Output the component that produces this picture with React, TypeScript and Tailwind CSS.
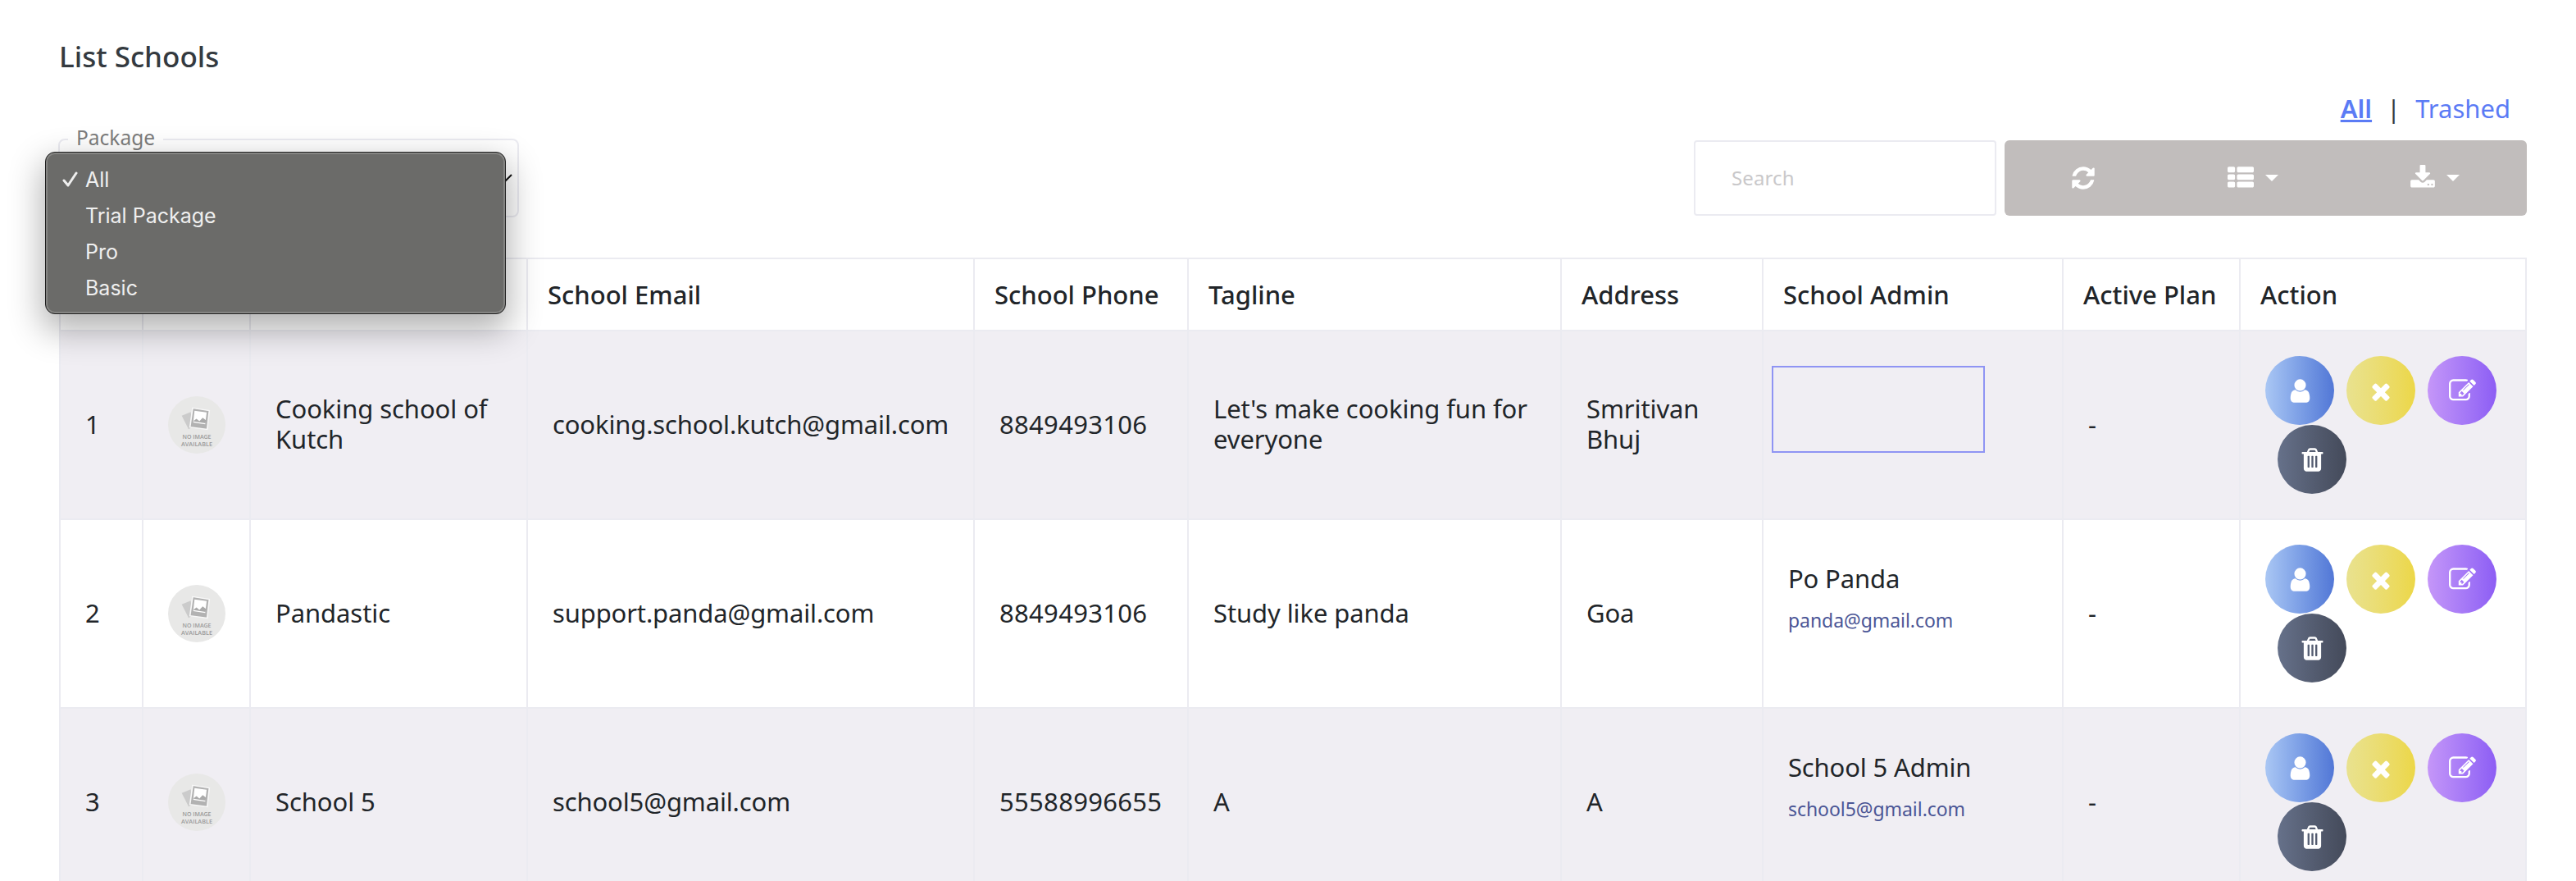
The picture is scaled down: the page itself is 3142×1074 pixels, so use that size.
const ICONS = {
  user: "M1536 1399q0 109-62.5 187t-150.5 78h-854q-88 0-150.5-78t-62.5-187q0-85 8.5-160.5t31.5-152 58.5-131 94-89 134.5-34.5q131 128 313 128t313-128q76 0 134.5 34.5t94 89 58.5 131 31.5 152 8.5 160.5zm-256-887q0 159-112.5 271.5t-271.5 112.5-271.5-112.5-112.5-271.5 112.5-271.5 271.5-112.5 271.5 112.5 112.5 271.5z",
  times: "M1490 1322q0 40-28 68l-136 136q-28 28-68 28t-68-28l-294-294-294 294q-28 28-68 28t-68-28l-136-136q-28-28-28-68t28-68l294-294-294-294q-28-28-28-68t28-68l136-136q28-28 68-28t68 28l294 294 294-294q28-28 68-28t68 28l136 136q28 28 28 68t-28 68l-294 294 294 294q28 28 28 68z",
  edit: "M888 1184l116-116-152-152-116 116v56h96v96h56zm440-720q-16-16-33 1l-350 350q-17 17-1 33t33-1l350-350q17-17 1-33zm80 594v190q0 119-84.5 203.5t-203.5 84.5h-832q-119 0-203.5-84.5t-84.5-203.5v-832q0-119 84.5-203.5t203.5-84.5h832q63 0 117 25 15 7 18 23 3 17-9 29l-49 49q-14 14-32 8-23-6-45-6h-832q-66 0-113 47t-47 113v832q0 66 47 113t113 47h832q66 0 113-47t47-113v-126q0-13 9-22l64-64q15-15 35-7t20 29zm-96-738l288 288-672 672h-288v-288zm444 132l-92 92-288-288 92-92q28-28 68-28t68 28l152 152q28 28 28 68t-28 68z",
  trash:
    "M704 1376v-704q0-14-9-23t-23-9h-64q-14 0-23 9t-9 23v704q0 14 9 23t23 9h64q14 0 23-9t9-23zm256 0v-704q0-14-9-23t-23-9h-64q-14 0-23 9t-9 23v704q0 14 9 23t23 9h64q14 0 23-9t9-23zm256 0v-704q0-14-9-23t-23-9h-64q-14 0-23 9t-9 23v704q0 14 9 23t23 9h64q14 0 23-9t9-23zm-544-992h448l-48-117q-7-9-17-11h-317q-10 2-17 11zm928 32v64q0 14-9 23t-23 9h-96v948q0 83-47 143.5t-113 60.5h-832q-66 0-113-58.5t-47-141.5v-952h-96q-14 0-23-9t-9-23v-64q0-14 9-23t23-9h309l70-167q15-37 54-63t79-26h320q40 0 79 26t54 63l70 167h309q14 0 23 9t9 23z",
  refresh:
    "M1639 1056q0 5-1 7-64 268-268 434.5t-478 166.5q-146 0-282.5-55t-243.5-157l-129 129q-19 19-45 19t-45-19-19-45v-448q0-26 19-45t45-19h448q26 0 45 19t19 45-19 45l-137 137q71 66 161 102t187 36q134 0 250-65t186-179q11-17 53-117 8-23 30-23h192q13 0 22.5 9.5t9.5 22.5zm25-800v448q0 26-19 45t-45 19h-448q-26 0-45-19t-19-45 19-45l138-138q-148-137-349-137-134 0-250 65t-186 179q-11 17-53 117-8 23-30 23h-199q-13 0-22.5-9.5t-9.5-22.5v-7q65-268 270-434.5t480-166.5q146 0 284 55.5t245 156.5l130-129q19-19 45-19t45 19 19 45z",
  list: "M512 1248v192q0 40-28 68t-68 28h-320q-40 0-68-28t-28-68v-192q0-40 28-68t68-28h320q40 0 68 28t28 68zm0-512v192q0 40-28 68t-68 28h-320q-40 0-68-28t-28-68v-192q0-40 28-68t68-28h320q40 0 68 28t28 68zm1280 512v192q0 40-28 68t-68 28h-960q-40 0-68-28t-28-68v-192q0-40 28-68t68-28h960q40 0 68 28t28 68zm-1280-1024v192q0 40-28 68t-68 28h-320q-40 0-68-28t-28-68v-192q0-40 28-68t68-28h320q40 0 68 28t28 68zm1280 512v192q0 40-28 68t-68 28h-960q-40 0-68-28t-28-68v-192q0-40 28-68t68-28h960q40 0 68 28t28 68zm0-512v192q0 40-28 68t-68 28h-960q-40 0-68-28t-28-68v-192q0-40 28-68t68-28h960q40 0 68 28t28 68z",
  download:
    "M1344 1344q0-26-19-45t-45-19-45 19-19 45 19 45 45 19 45-19 19-45zm256 0q0-26-19-45t-45-19-45 19-19 45 19 45 45 19 45-19 19-45zm128-224v320q0 40-28 68t-68 28h-1472q-40 0-68-28t-28-68v-320q0-40 28-68t68-28h465l135 136q58 56 136 56t136-56l136-136h464q40 0 68 28t28 68zm-325-569q17 41-14 70l-448 448q-18 19-45 19t-45-19l-448-448q-31-29-14-70 17-39 59-39h256v-448q0-26 19-45t45-19h256q26 0 45 19t19 45v448h256q42 0 59 39z",
};

function Icon({ name, className }: { name: keyof typeof ICONS; className: string }) {
  return (
    <svg viewBox="0 0 1792 1792" fill="currentColor" className={className}>
      <path d={ICONS[name]} />
    </svg>
  );
}

function Caret() {
  return <span className="h-0 w-0 border-x-8 border-t-8 border-x-transparent border-t-white" />;
}

function NoImage() {
  return (
    <svg viewBox="0 0 70 84" className="block h-[70px] w-[70px]" preserveAspectRatio="none">
      <ellipse cx="35" cy="42" rx="35" ry="42" fill="#e8e8e7" />
      <path d="M16.700 28.500l11-5.500 2 22-4.700 3.400z" fill="#cbcbcb" />
      <path d="M30 17.300l20.300 3.900-2.600 27.300-21-3.300z" fill="#b2b2b2" stroke="#f8f8f8" strokeWidth="1.600" />
      <path d="M32.300 21.200l14.700 2.400-1.700 17.400-14.600-2.600z" fill="#fff" />
      <path d="M31.200 36l3.500-3 3.500 3.500 4-5 4 3.500-.500 4.500-14.500-2.500z" fill="#aaa" />
      <text x="35" y="63" textAnchor="middle" textLength="35" lengthAdjust="spacingAndGlyphs" fontSize="8.500" fontFamily="Open Sans, sans-serif" fill="#9a9a9a" fontWeight="600">NO IMAGE</text>
      <text x="35" y="73" textAnchor="middle" textLength="38" lengthAdjust="spacingAndGlyphs" fontSize="8.500" fontFamily="Open Sans, sans-serif" fill="#9a9a9a" fontWeight="600">AVAILABLE</text>
    </svg>
  );
}

type School = {
  id: number;
  name: string[];
  email: string;
  phone: string;
  tagline: string[];
  address: string[];
  admin?: { name: string; email: string };
};

const SCHOOLS: School[] = [
  { id: 1, name: ["Cooking school of", "Kutch"], email: "cooking.school.kutch@gmail.com", phone: "8849493106", tagline: ["Let's make cooking fun for", "everyone"], address: ["Smritivan", "Bhuj"] },
  { id: 2, name: ["Pandastic"], email: "support.panda@gmail.com", phone: "8849493106", tagline: ["Study like panda"], address: ["Goa"], admin: { name: "Po Panda", email: "panda@gmail.com" } },
  { id: 3, name: ["School 5"], email: "school5@gmail.com", phone: "55588996655", tagline: ["A"], address: ["A"], admin: { name: "School 5 Admin", email: "school5@gmail.com" } },
];

const HEADERS = ["", "", "", "School Email", "School Phone", "Tagline", "Address", "School Admin", "Active Plan", "Action"];

function Lines({ lines }: { lines: string[] }) {
  return (
    <>
      {lines.map((line) => (
        <div key={line}>{line}</div>
      ))}
    </>
  );
}

const TD = "border-b-2 border-l-2 border-[#ebebf1] p-0 pb-[2px] pl-[30px] align-middle whitespace-nowrap";
const ROUND = "flex h-[84px] w-[84px] items-center justify-center rounded-full bg-linear-to-r text-white";

function Row({ school }: { school: School }) {
  return (
    <tr className="h-[230px] odd:bg-[#f0eef3]">
      <td className={TD}>{school.id}</td>
      <td className="border-b-2 border-l-2 border-[#ebebf1] p-0 pl-[30px] align-middle"><NoImage /></td>
      <td className={TD + " tracking-[-0.08px]"}><Lines lines={school.name} /></td>
      <td className={TD + " tracking-[-0.14px]"}>{school.email}</td>
      <td className={TD + " tracking-[0.3px]"}>{school.phone}</td>
      <td className={TD + " tracking-[-0.1px]"}><Lines lines={school.tagline} /></td>
      <td className={TD + " tracking-[-0.1px]"}><Lines lines={school.address} /></td>
      <td className="border-b-2 border-l-2 border-[#ebebf1] p-0 align-top whitespace-nowrap">
        {school.admin ? (
          <div className="pt-[53px] pl-[30px]">
            <div className="tracking-[-0.15px]">{school.admin.name}</div>
            <div className="mt-[18px] text-[23px] leading-[28px] tracking-[-0.05px] text-[#4b5696]">{school.admin.email}</div>
          </div>
        ) : (
          <div className="mt-[42px] ml-[10px] h-[106px] w-[260px] border-2 border-[#8f94f3]" />
        )}
      </td>
      <td className={TD}>-</td>
      <td className="border-r-2 border-b-2 border-l-2 border-[#ebebf1] p-0 pt-[30px] pl-[30px] align-top">
        <div className="flex gap-[15px]">
          <div className={ROUND + " from-[#aac7f4] to-[#5277d6]"}><Icon name="user" className="mt-px h-[33px] w-[33px]" /></div>
          <div className={ROUND + " from-[#e9e28f] to-[#ecd747]"}><Icon name="times" className="mt-px h-[32px] w-[32px]" /></div>
          <div className={ROUND + " from-[#c596f8] to-[#8d5df4]"}><Icon name="edit" className="mt-px h-[33px] w-[33px]" /></div>
        </div>
        <div className={ROUND + " ml-[15px] from-[#66718a] to-[#444a5a]"}><Icon name="trash" className="mt-px h-[33px] w-[33px]" /></div>
      </td>
    </tr>
  );
}

export default function App() {
  return (
    <div className="h-[1074px] w-[3142px] overflow-hidden bg-white px-[72px] font-['Noto_Sans','Open_Sans',sans-serif] text-[31px] leading-[37px] text-[#212529]">
      <h1 className="pt-[50px] text-[35px] leading-[38px] font-medium text-[#343a40]">List Schools</h1>
      <nav className="mt-[22px] mr-[8px] flex h-[44px] items-center justify-end gap-[18px] text-[#5b7bf5]">
        <a className="font-semibold underline decoration-[3px] underline-offset-[2px]">All</a>
        <span className="text-[#343a40]">|</span>
        <a>Trashed</a>
      </nav>

      <div className="flex h-[111px] items-end justify-between">
        <div className="relative -ml-px h-[96px] w-[562px] rounded-lg border-2 border-[#ebebf1]">
          <span className="absolute -top-[19px] left-[10px] bg-white px-[10px] text-[24.500px] leading-[32px] text-[#7d7d7d]">Package</span>
          <svg viewBox="0 0 24 14" className="absolute top-[41px] right-[6px] h-[14px] w-[24px]" fill="none" stroke="#111" strokeWidth="2"><path d="M1 1l11 11L23 1" /></svg>
          <div className="absolute top-[14px] -left-[18px] z-10 h-[198px] w-[562px] rounded-[12px] border border-[#1f1f1f] bg-[#6b6b69] pt-[11px] font-[Inter,sans-serif] text-[25px] leading-[44px] text-[#efefef] shadow-[0_16px_40px_4px_rgba(0,0,0,0.3),inset_0_0_0_2px_#858583]">
            {["All", "Trial Package", "Pro", "Basic"].map((option) => (
              <div key={option} className="flex h-[44px] items-center pl-[20px]">
                <span className="flex w-[28px]">
                  {option === "All" && (
                    <svg viewBox="0 0 20 20" className="h-[20px] w-[20px]" fill="none" stroke="currentColor" strokeWidth="3" strokeLinecap="round" strokeLinejoin="round"><path d="M2 11l5 6L17 2" /></svg>
                  )}
                </span>
                {option}
              </div>
            ))}
          </div>
        </div>
        <div className="-mr-[12px] mb-[2px] flex">
          <div className="mr-[10px] flex h-[92px] w-[369px] items-center rounded border-2 border-[#ebebf1] pb-px pl-[44px] text-[24px] tracking-[0.1px] text-[#c9c8ca]">Search</div>
          <div className="flex h-[92px] w-[637px] items-center rounded-md bg-[#c1bdbc] text-white">
            <div className="ml-[80px] w-[192px]"><Icon name="refresh" className="h-[32px] w-[32px]" /></div>
            <div className="flex w-[222px] items-center gap-[14px]"><Icon name="list" className="h-[32px] w-[32px]" /><Caret /></div>
            <div className="flex items-center gap-[13px]"><Icon name="download" className="h-[32px] w-[32px]" /><Caret /></div>
          </div>
        </div>
      </div>

      <table className="mt-[49px] w-[3010px] table-fixed border-separate border-spacing-0 border-t-2 border-[#ebebf1]">
        <colgroup>
          {[101, 131, 338, 545, 261, 455, 246, 366, 216, 351].map((width, i) => (
            <col key={i} style={{ width }} />
          ))}
        </colgroup>
        <thead>
          <tr className="h-[88px]">
            {HEADERS.map((title, i) => (
              <th key={i} className="border-b-2 border-l-2 border-[#ebebf1] p-0 pl-[24px] text-left align-middle font-medium whitespace-nowrap last:border-r-2">{title}</th>
            ))}
          </tr>
        </thead>
        <tbody>
          {SCHOOLS.map((school) => (
            <Row key={school.id} school={school} />
          ))}
        </tbody>
      </table>
    </div>
  );
}
